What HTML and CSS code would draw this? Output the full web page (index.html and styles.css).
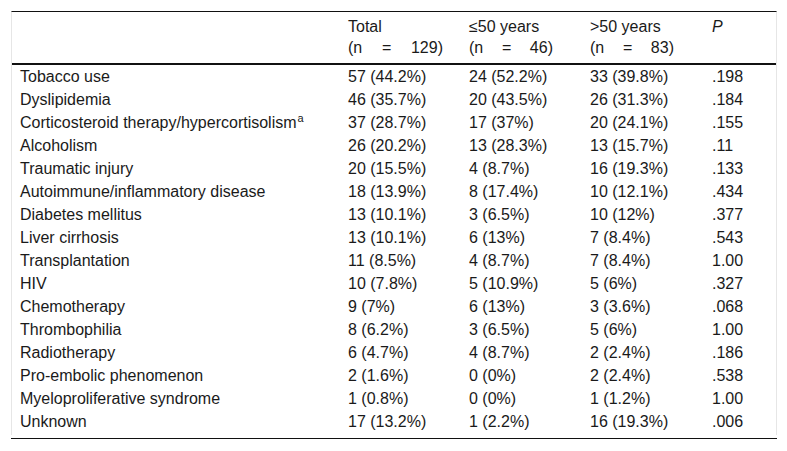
FILE: index.html
```html
<!DOCTYPE html>
<html>
<head>
<meta charset="utf-8">
<link rel="stylesheet" href="styles.css">
</head>
<body>
<div class="page">
  <div class="frame">
    <div class="row head">
      <div class="cell"></div>
      <div class="cell"><div>Total</div><div class="n wide"><span>(n</span><span>=</span><span>129)</span></div></div>
      <div class="cell"><div>≤50 years</div><div class="n"><span>(n</span><span>=</span><span>46)</span></div></div>
      <div class="cell"><div>&gt;50 years</div><div class="n"><span>(n</span><span>=</span><span>83)</span></div></div>
      <div class="cell"><i>P</i></div>
    </div>
    <div class="row"><div class="cell">Tobacco use</div><div class="cell">57 (44.2%)</div><div class="cell">24 (52.2%)</div><div class="cell">33 (39.8%)</div><div class="cell">.198</div></div>
    <div class="row"><div class="cell">Dyslipidemia</div><div class="cell">46 (35.7%)</div><div class="cell">20 (43.5%)</div><div class="cell">26 (31.3%)</div><div class="cell">.184</div></div>
    <div class="row"><div class="cell">Corticosteroid therapy/hypercortisolism<sup>a</sup></div><div class="cell">37 (28.7%)</div><div class="cell">17 (37%)</div><div class="cell">20 (24.1%)</div><div class="cell">.155</div></div>
    <div class="row"><div class="cell">Alcoholism</div><div class="cell">26 (20.2%)</div><div class="cell">13 (28.3%)</div><div class="cell">13 (15.7%)</div><div class="cell">.11</div></div>
    <div class="row"><div class="cell">Traumatic injury</div><div class="cell">20 (15.5%)</div><div class="cell">4 (8.7%)</div><div class="cell">16 (19.3%)</div><div class="cell">.133</div></div>
    <div class="row"><div class="cell">Autoimmune/inflammatory disease</div><div class="cell">18 (13.9%)</div><div class="cell">8 (17.4%)</div><div class="cell">10 (12.1%)</div><div class="cell">.434</div></div>
    <div class="row"><div class="cell">Diabetes mellitus</div><div class="cell">13 (10.1%)</div><div class="cell">3 (6.5%)</div><div class="cell">10 (12%)</div><div class="cell">.377</div></div>
    <div class="row"><div class="cell">Liver cirrhosis</div><div class="cell">13 (10.1%)</div><div class="cell">6 (13%)</div><div class="cell">7 (8.4%)</div><div class="cell">.543</div></div>
    <div class="row"><div class="cell">Transplantation</div><div class="cell">11 (8.5%)</div><div class="cell">4 (8.7%)</div><div class="cell">7 (8.4%)</div><div class="cell">1.00</div></div>
    <div class="row"><div class="cell">HIV</div><div class="cell">10 (7.8%)</div><div class="cell">5 (10.9%)</div><div class="cell">5 (6%)</div><div class="cell">.327</div></div>
    <div class="row"><div class="cell">Chemotherapy</div><div class="cell">9 (7%)</div><div class="cell">6 (13%)</div><div class="cell">3 (3.6%)</div><div class="cell">.068</div></div>
    <div class="row"><div class="cell">Thrombophilia</div><div class="cell">8 (6.2%)</div><div class="cell">3 (6.5%)</div><div class="cell">5 (6%)</div><div class="cell">1.00</div></div>
    <div class="row"><div class="cell">Radiotherapy</div><div class="cell">6 (4.7%)</div><div class="cell">4 (8.7%)</div><div class="cell">2 (2.4%)</div><div class="cell">.186</div></div>
    <div class="row"><div class="cell">Pro-embolic phenomenon</div><div class="cell">2 (1.6%)</div><div class="cell">0 (0%)</div><div class="cell">2 (2.4%)</div><div class="cell">.538</div></div>
    <div class="row"><div class="cell">Myeloproliferative syndrome</div><div class="cell">1 (0.8%)</div><div class="cell">0 (0%)</div><div class="cell">1 (1.2%)</div><div class="cell">1.00</div></div>
    <div class="row"><div class="cell">Unknown</div><div class="cell">17 (13.2%)</div><div class="cell">1 (2.2%)</div><div class="cell">16 (19.3%)</div><div class="cell">.006</div></div>
  </div>
  <div class="rule"></div>
</div>
</body>
</html>
```

FILE: styles.css
```css
html, body {
  margin: 0;
  background: #fff;
}
body {
  font-family: "Liberation Sans", Arial, sans-serif;
  font-size: 16px;
  color: #1a1a1a;
}
.page {
  padding: 11px 10px 0 11px;
}
.frame {
  border-top: 1px solid #111;
  border-left: 1px solid #e6e6e6;
  border-right: 1px solid #e6e6e6;
  padding-bottom: 2px;
}
.row {
  display: grid;
  grid-template-columns: 328px 121px 121px 122px 1fr;
  line-height: 23px;
  height: 23px;
}
.row.head {
  height: auto;
  line-height: 21px;
  padding: 4px 0 5px;
  border-bottom: 2px solid #111;
}
.cell {
  padding: 0 8px;
  white-space: nowrap;
}
.n {
  display: flex;
  justify-content: space-between;
  width: 84px;
}
.n.wide {
  width: 95px;
}
sup {
  font-size: 11px;
  line-height: 0;
  vertical-align: 6px;
  margin-left: 1px;
}
.rule {
  margin-top: 3px;
  height: 1px;
  background: #111;
}
```
